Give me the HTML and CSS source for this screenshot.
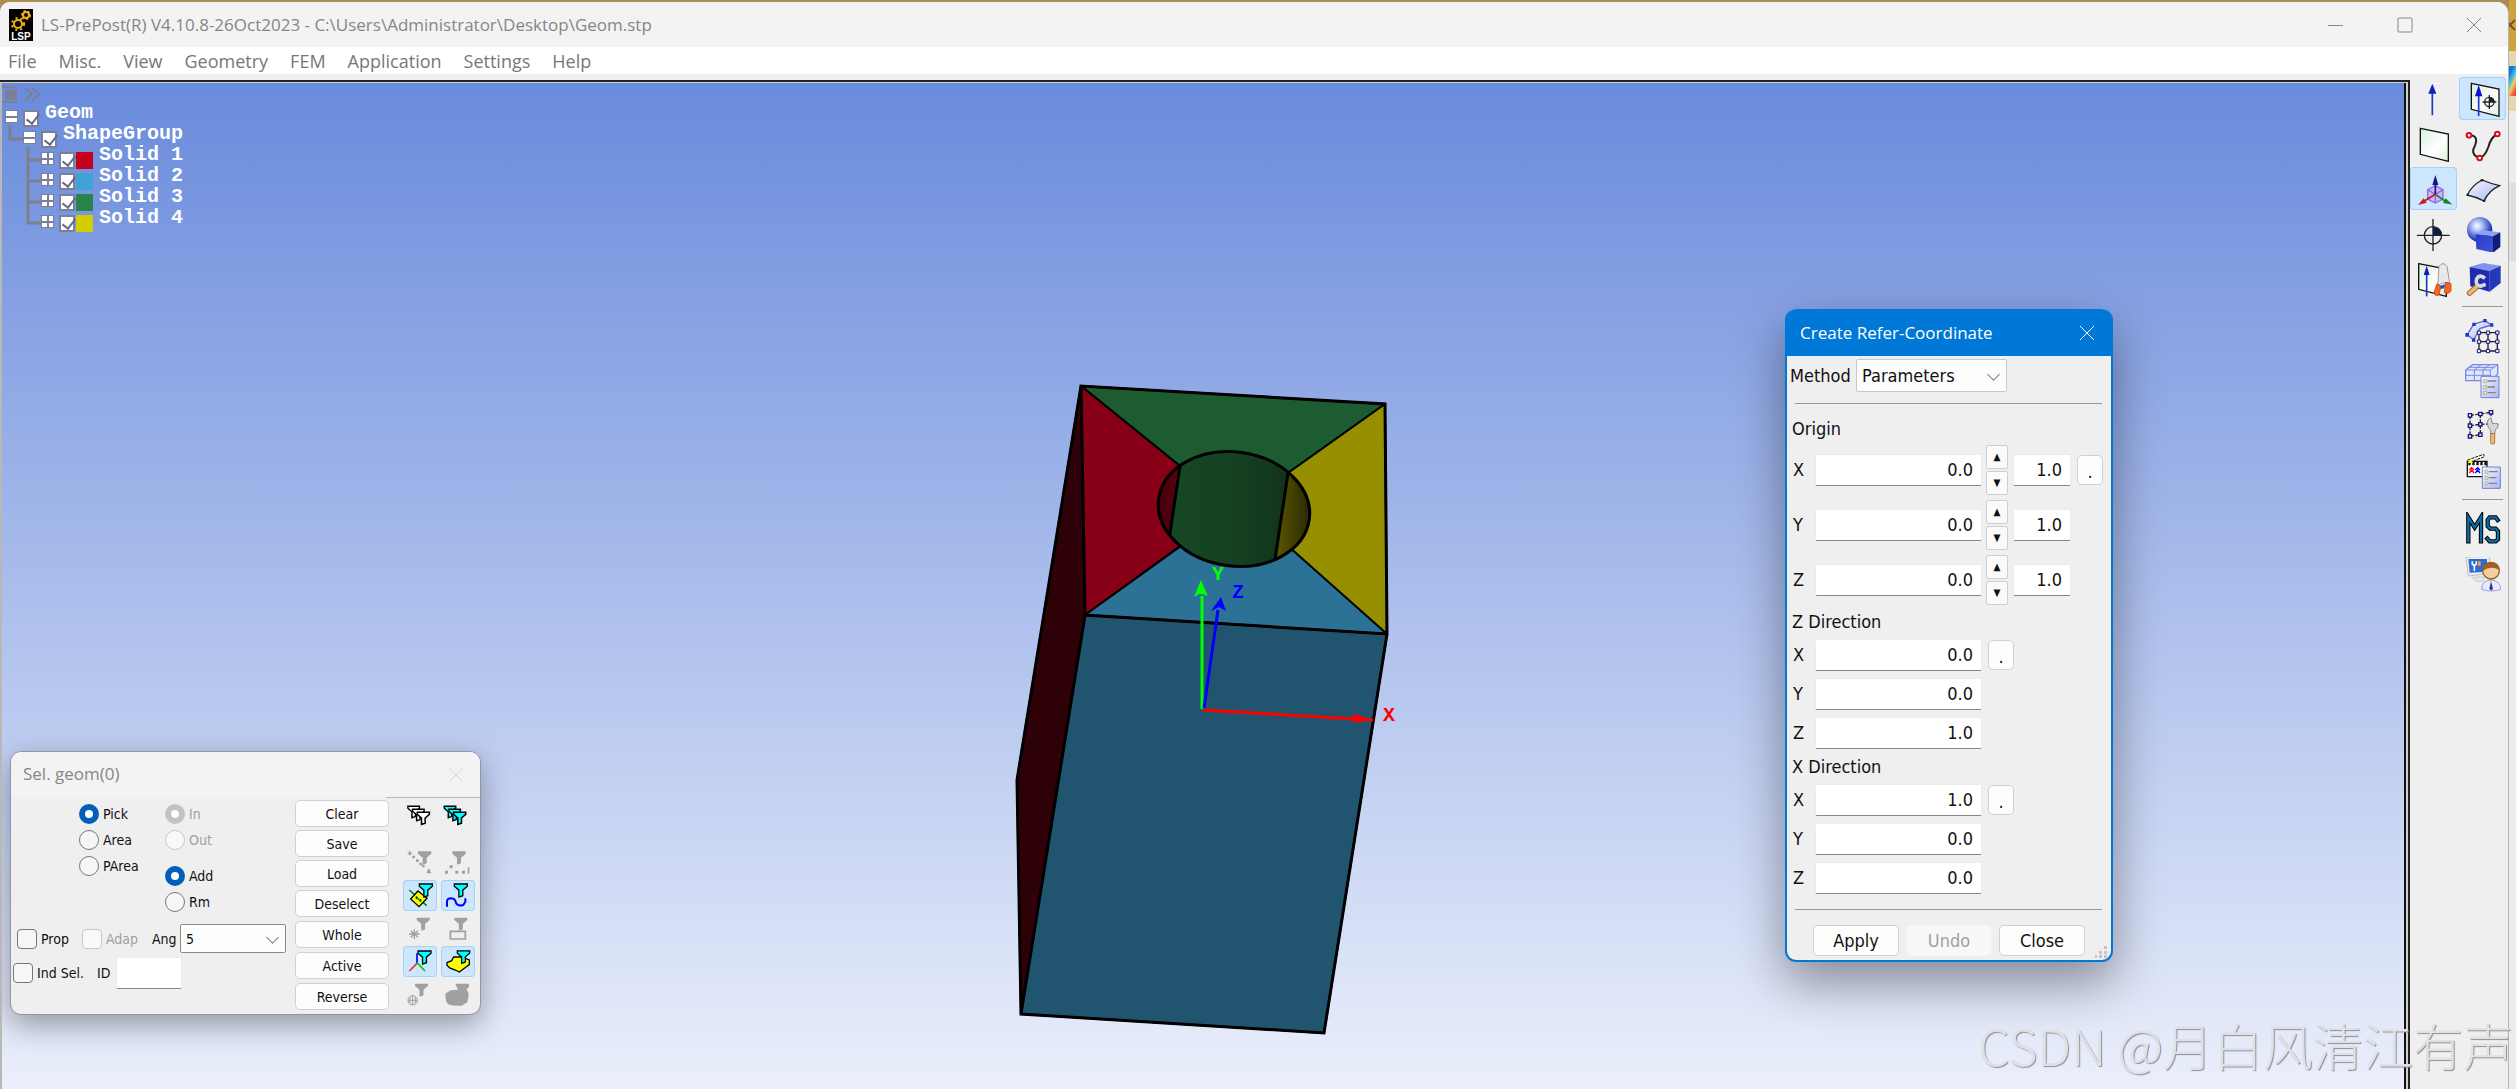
FILE: index.html
```html
<!DOCTYPE html>
<html lang="en">
<head>
<meta charset="utf-8">
<title>LS-PrePost(R) V4.10.8-26Oct2023</title>
<link rel="stylesheet" href="styles.css">
</head>
<body>
<svg class="defs" aria-hidden="true">
  <defs>
    <linearGradient id="sheet" x1="0" y1="0" x2="1" y2="1"><stop offset="0" stop-color="#d8efd8"/><stop offset=".6" stop-color="#fff"/><stop offset="1" stop-color="#d8f0d8"/></linearGradient>
    <linearGradient id="lilac" x1="0" y1="0" x2="1" y2="1"><stop offset="0" stop-color="#f6f8ff"/><stop offset="1" stop-color="#a9b6f4"/></linearGradient>
    <linearGradient id="face" x1="0" y1="0" x2="1" y2="1"><stop offset="0" stop-color="#2a3bc0"/><stop offset="1" stop-color="#3c55dd"/></linearGradient>
    <radialGradient id="ball" cx=".4" cy=".35" r=".7"><stop offset="0" stop-color="#fff"/><stop offset=".35" stop-color="#9fb2f2"/><stop offset=".8" stop-color="#2438b4"/><stop offset="1" stop-color="#16207c"/></radialGradient>
    <linearGradient id="bore" x1="0" x2="1"><stop offset="0" stop-color="#174a26"/><stop offset=".5" stop-color="#154122"/><stop offset="1" stop-color="#0e2c17"/></linearGradient>
    <linearGradient id="boreYellow" x1="0" x2="1"><stop offset="0" stop-color="#5f5b00"/><stop offset="1" stop-color="#1d1b00"/></linearGradient>
    <linearGradient id="boreRed" x1="0" x2="1"><stop offset="0" stop-color="#3a000a"/><stop offset="1" stop-color="#5e000f"/></linearGradient>
    <symbol id="funnel" viewBox="0 0 44 44" overflow="visible"><path d="M2 2H42V9L28 21V38L16 42V21L2 9Z" /></symbol>
    <symbol id="list" viewBox="0 0 58 68" overflow="visible"><path d="M2 2H56V66H2Z" fill="url(#lilac)" stroke="#7480cc" stroke-width="3"/><path d="M22 16H48M22 34H44M22 51H46" stroke="#80847c" stroke-width="4"/><path d="M10 12h9v9h-9zM10 30h9v9h-9zM10 47h9v9h-9z" fill="#f5f07a" stroke="#9a9ab0" stroke-width="2"/></symbol>
  </defs>
</svg>

<div class="window">
  <header class="titlebar">
    <svg class="app-logo" viewBox="0 0 24 32" aria-hidden="true"><path d="M0 0H24V32H0Z"/><g fill="none" stroke="#f2b01e"><circle cx="9" cy="15" r="4" stroke-width="2"/><circle cx="9" cy="15" r="6" stroke-width="2" stroke-dasharray="2 3"/><circle cx="17" cy="6" r="3" stroke-width="2"/><circle cx="17" cy="6" r="4" stroke-width="2" stroke-dasharray="2 2"/></g><text x="12" y="31" text-anchor="middle">LSP</text></svg>
    <h1 class="window-title">LS-PrePost(R) V4.10.8-26Oct2023 - C:\Users\Administrator\Desktop\Geom.stp</h1>
    <div class="caption-buttons">
      <button aria-label="Minimize"><svg viewBox="0 0 16 16"><path d="M0 8.500H15"/></svg></button>
      <button aria-label="Maximize"><svg viewBox="0 0 16 16"><rect x="1" y="1" width="14" height="14" rx="1"/></svg></button>
      <button aria-label="Close"><svg viewBox="0 0 16 16"><path d="M1 1L15 15M15 1L1 15"/></svg></button>
    </div>
  </header>
  <nav class="menubar">
    <a href="#">File</a><a href="#">Misc.</a><a href="#">View</a><a href="#">Geometry</a><a href="#">FEM</a><a href="#">Application</a><a href="#">Settings</a><a href="#">Help</a>
  </nav>

  <div class="workspace">
    <main class="scene-frame">
      <div class="scene">
        <svg class="model" viewBox="993 370 420 690" aria-label="Solid model">
          <g stroke="#000" stroke-width="2" stroke-linejoin="round">
            <path d="M1081 386L1017 780L1021 1014L1085 615Z" fill="#2e0007"/>
            <path d="M1085 615L1387 634L1324 1033L1021 1014Z" fill="#20546f"/>
            <path d="M1081 386L1385 404L1288 473Q1234 440 1180 466Z" fill="#1d5c31"/>
            <path d="M1081 386L1180 466V546L1085 615Z" fill="#880015"/>
            <path d="M1385 404L1387 634L1288 553V473Z" fill="#969000"/>
            <path d="M1085 615L1181 546H1288L1387 634Z" fill="#2c7296"/>
          </g>
          <clipPath id="hole"><ellipse cx="1234" cy="509" rx="77" ry="58" transform="rotate(8 1234 509)"/></clipPath>
          <g clip-path="url(#hole)">
            <path d="M1150 440H1320V580H1150Z" fill="url(#bore)"/>
            <path d="M1150 440H1183L1180 466L1170 540H1150Z" fill="url(#boreRed)"/>
            <path d="M1290 460H1320V580H1272Z" fill="url(#boreYellow)"/>
            <path d="M1180 466L1169 540M1288 473L1274 566" fill="none" stroke="#000" stroke-width="3"/>
          </g>
          <g fill="none" stroke="#000" stroke-width="3">
            <ellipse cx="1234" cy="509" rx="76" ry="57" transform="rotate(8 1234 509)"/>
            <path d="M1081 386L1085 615L1387 634L1385 404Z M1081 386L1017 780L1021 1014L1324 1033L1387 634M1085 615L1021 1014"/>
          </g>
          <g fill="none" stroke-width="3">
            <path d="M1202 709V596" stroke="#0f0"/><path d="M1201 580L1208 596L1203 594H1199L1194 597Z" fill="#0f0" stroke="none"/>
            <path d="M1204 708L1218 610" stroke="#00f"/><path d="M1221 597L1226 611L1219 607L1211 611Z" fill="#00f" stroke="none"/>
            <path d="M1203 710L1373 720" stroke="red"/><path d="M1374 720L1351 713L1357 719L1351 723Z" fill="red" stroke="none"/>
          </g>
          <g class="axis-names"><text x="1212" y="580" fill="#0f0">Y</text><text x="1232" y="598" fill="#00f">Z</text><text x="1383" y="721" fill="red">X</text></g>
        </svg>

        <aside class="tree">
          <svg class="tree-tools" viewBox="0 0 40 18" aria-hidden="true"><g fill="none" stroke="#7c7f98"><path d="M0 1H14V16H0" stroke-width="2"/><path d="M23 2L30 8L23 15M30 2L37 8L30 15" stroke-width="2"/></g><path d="M3 4H13V14H3Z" fill="#7c7f98"/></svg>
          <svg class="tree-lines" viewBox="0 0 40 120" aria-hidden="true"><path d="M8 12V26H22M26 34V110H40M26 47H40M26 68H40M26 89H40" fill="none" stroke="#7d8088" stroke-width="3"/></svg>
          <div class="node level-0"><span class="twisty"></span><input type="checkbox" id="t0" checked><label for="t0">Geom</label></div>
          <div class="node level-1"><span class="twisty"></span><input type="checkbox" id="t1" checked><label for="t1">ShapeGroup</label></div>
          <div class="node level-2"><span class="twisty plus"></span><input type="checkbox" id="t2" checked><i class="swatch red"></i><label for="t2">Solid 1</label></div>
          <div class="node level-2"><span class="twisty plus"></span><input type="checkbox" id="t3" checked><i class="swatch blue"></i><label for="t3">Solid 2</label></div>
          <div class="node level-2"><span class="twisty plus"></span><input type="checkbox" id="t4" checked><i class="swatch green"></i><label for="t4">Solid 3</label></div>
          <div class="node level-2"><span class="twisty plus"></span><input type="checkbox" id="t5" checked><i class="swatch yellow"></i><label for="t5">Solid 4</label></div>
        </aside>

        <section class="select-panel">
          <header class="panel-title"><h2>Sel. geom(0)</h2><button aria-label="Close"><svg viewBox="0 0 16 16"><path d="M1 1L15 15M15 1L1 15"/></svg></button></header>
          <div class="panel-body">
            <div class="options">
              <div class="radios">
                <div class="radio-col">
                  <label><input type="radio" name="pick" checked>Pick</label>
                  <label><input type="radio" name="pick">Area</label>
                  <label><input type="radio" name="pick">PArea</label>
                </div>
                <div class="radio-col">
                  <label class="off"><input type="radio" name="side" checked disabled>In</label>
                  <label class="off"><input type="radio" name="side" disabled>Out</label>
                  <label class="apart"><input type="radio" name="mode" checked>Add</label>
                  <label><input type="radio" name="mode">Rm</label>
                </div>
              </div>
              <div class="line prop-line">
                <label><input type="checkbox">Prop</label>
                <label class="off"><input type="checkbox" disabled>Adap</label>
                <label for="ang">Ang</label>
                <span class="drop ang"><select id="ang"><option>5</option></select></span>
              </div>
              <div class="line id-line">
                <label><input type="checkbox">Ind Sel.</label>
                <label for="pid">ID</label><input class="field" type="text" id="pid">
              </div>
            </div>
            <div class="actions">
              <button>Clear</button><button>Save</button><button>Load</button><button>Deselect</button><button>Whole</button><button>Active</button><button>Reverse</button>
            </div>
            <div class="filters">
              <button aria-label="Clear filters"><svg viewBox="1209 181 102 93"><g fill="#fff" stroke="#000" stroke-width="5"><use href="#funnel" x="1222" y="198" width="38" height="38"/><use href="#funnel" x="1236" y="207" width="38" height="38"/><use href="#funnel" x="1250" y="216" width="40" height="40"/></g></svg></button>
              <button aria-label="All filters"><svg viewBox="1323 181 102 93"><g fill="#0ff" stroke="#000" stroke-width="5"><use href="#funnel" x="1331" y="198" width="38" height="38"/><use href="#funnel" x="1345" y="207" width="38" height="38"/><use href="#funnel" x="1359" y="216" width="40" height="40"/></g></svg></button>
              <button class="second" aria-label="Edge filter" disabled><svg viewBox="1209 321 102 93"><g fill="#a0a0a0"><use href="#funnel" x="1252" y="332" width="44" height="44"/><path d="M1223 338h12v5h-12zM1227 334h5v12h-5zM1237 347h8v8h-8zM1248 358h8v8h-8zM1258 368h8v8h-8zM1266 374h8v8h-8zM1282 390l6 -4 6 14h-14z"/></g></svg></button>
              <button class="second" aria-label="Point filter" disabled><svg viewBox="1323 321 102 93"><g fill="#a0a0a0"><use href="#funnel" x="1355" y="332" width="44" height="44"/><path d="M1335 392h9v9h-9zM1349 376h9v9h-9zM1366 392h9v9h-9zM1386 392h9v9h-9zM1403 382h5v19h-5z"/></g></svg></button>
              <button class="on" aria-label="Surface filter"><svg viewBox="1209 421 102 93"><path d="M1228 451L1280 498" stroke="#080" stroke-width="5"/><path d="M1232 478L1254 454L1281 476L1257 501Z" fill="#ff0" stroke="#000" stroke-width="4"/><path d="M1249 470L1262 486M1249 470v9M1262 478v9" stroke="#060" stroke-width="4"/><use href="#funnel" x="1256" y="431" width="43" height="43" fill="#0ff" stroke="#000" stroke-width="4"/></svg></button>
              <button class="on" aria-label="Curve filter"><svg viewBox="1323 421 102 93"><path d="M1341 501V486Q1341 476 1354 476Q1366 477 1368 490Q1374 501 1390 496L1396 486V476" fill="none" stroke="#00f" stroke-width="6"/><use href="#funnel" x="1361" y="431" width="43" height="43" fill="#0ff" stroke="#000" stroke-width="4"/></svg></button>
              <button aria-label="Node filter" disabled><svg viewBox="1209 520 102 93"><use href="#funnel" x="1248" y="532" width="43" height="43" fill="#a0a0a0"/><path d="M1227 583H1259M1243 569V599M1232 573L1254 593M1254 573L1232 593" stroke="#a0a0a0" stroke-width="4"/></svg></button>
              <button aria-label="Element filter" disabled><svg viewBox="1323 520 102 93"><use href="#funnel" x="1360" y="532" width="45" height="43" fill="#a0a0a0"/><path d="M1351 575H1396V598H1351Z" fill="#efefef" stroke="#a0a0a0" stroke-width="5"/></svg></button>
              <button class="on" aria-label="Axis filter"><svg viewBox="1209 618 102 93"><g stroke-width="5"><path d="M1251 640V672" stroke="#00f"/><path d="M1251 670L1228 693" stroke="#f03030"/><path d="M1251 668L1275 693" stroke="#0c0"/></g><use href="#funnel" x="1252" y="631" width="43" height="43" fill="#0ff" stroke="#000" stroke-width="4"/></svg></button>
              <button class="on" aria-label="Solid filter"><svg viewBox="1323 618 102 93"><path d="M1341 668L1355 662L1361 651H1384L1408 660V674L1394 684L1378 696L1366 690L1349 684L1341 676Z" fill="#ff0" stroke="#000" stroke-width="4"/><use href="#funnel" x="1370" y="631" width="41" height="41" fill="#0ff" stroke="#000" stroke-width="4"/></svg></button>
              <button aria-label="Mesh filter" disabled><svg viewBox="1209 718 102 93"><use href="#funnel" x="1243" y="730" width="43" height="43" fill="#a0a0a0"/><g fill="none" stroke="#a0a0a0" stroke-width="3"><circle cx="1238" cy="782" r="14"/><path d="M1224 782H1252M1238 768V796M1230 772V792M1246 772V792"/></g></svg></button>
              <button aria-label="Part filter" disabled><svg viewBox="1323 718 102 93"><path d="M1366 732H1407V741L1399 750Q1408 756 1405 772L1402 788L1385 798Q1360 800 1345 794L1338 784L1336 762L1352 752L1374 750Z" fill="#a0a0a0"/></svg></button>
            </div>
          </div>
        </section>

        <section class="dialog">
          <header class="dialog-title"><h2>Create Refer-Coordinate</h2><button aria-label="Close"><svg viewBox="0 0 16 16"><path d="M1 1L15 15M15 1L1 15"/></svg></button></header>
          <div class="dialog-body">
            <div class="method"><label for="method">Method</label><span class="drop"><select id="method"><option>Parameters</option></select></span></div>
            <hr>
            <h3 class="origin-head">Origin</h3>
            <div class="row tall"><label for="ox">X</label><input class="field" type="text" id="ox" value="0.0"><span class="spin"><button aria-label="Up">▲</button><button aria-label="Down">▼</button></span><input class="field step" type="text" aria-label="X step" value="1.0"><button class="dot">.</button></div>
            <div class="row tall"><label for="oy">Y</label><input class="field" type="text" id="oy" value="0.0"><span class="spin"><button aria-label="Up">▲</button><button aria-label="Down">▼</button></span><input class="field step" type="text" aria-label="Y step" value="1.0"></div>
            <div class="row tall"><label for="oz">Z</label><input class="field" type="text" id="oz" value="0.0"><span class="spin"><button aria-label="Up">▲</button><button aria-label="Down">▼</button></span><input class="field step" type="text" aria-label="Z step" value="1.0"></div>
            <h3>Z Direction</h3>
            <div class="row"><label for="zx">X</label><input class="field" type="text" id="zx" value="0.0"><button class="dot">.</button></div>
            <div class="row"><label for="zy">Y</label><input class="field" type="text" id="zy" value="0.0"></div>
            <div class="row"><label for="zz">Z</label><input class="field" type="text" id="zz" value="1.0"></div>
            <h3>X Direction</h3>
            <div class="row"><label for="xx">X</label><input class="field" type="text" id="xx" value="1.0"><button class="dot">.</button></div>
            <div class="row"><label for="xy">Y</label><input class="field" type="text" id="xy" value="0.0"></div>
            <div class="row"><label for="xz">Z</label><input class="field" type="text" id="xz" value="0.0"></div>
            <hr class="foot-rule">
            <div class="dialog-buttons"><button>Apply</button><button disabled>Undo</button><button>Close</button></div>
          </div>
          <svg class="grip" viewBox="0 0 12 12" aria-hidden="true"><path d="M9 0h3v3h-3zM9 5h3v3h-3zM4 5h3v3h-3zM9 9h3v3h-3zM4 9h3v3h-3zM0 9h2v3h-2z" fill="#c4c4c4"/></svg>
        </section>
      </div>
    </main>

    <aside class="toolbars">
      <div class="toolbar">
        <button aria-label="Axis"><svg viewBox="105 242 108 108"><path d="M154 345V270" stroke="#1a3ac8" stroke-width="5"/><path d="M154 250L166 280H142Z" fill="#1020c0"/><path d="M135 250H180" stroke="#fff" stroke-width="2"/></svg></button>
        <button aria-label="Plane"><svg viewBox="105 377 108 108"><path d="M118 384L202 401V483L118 462Z" fill="url(#sheet)" stroke="#111" stroke-width="4"/></svg></button>
        <button class="on" aria-label="Coordinate"><svg viewBox="105 512 108 108"><path d="M163 556L186 568V596L163 608L140 596V568ZM163 582V608M163 582L140 568M163 582L186 568" fill="#c9b8f5" stroke="#8f6ae8" stroke-width="4"/><path d="M163 582V550" stroke="#118" stroke-width="5"/><path d="M163 524L172 554H154Z" fill="#118"/><path d="M163 582L130 602" stroke="#c11" stroke-width="5"/><path d="M111 614L128 594L137 607Z" fill="#d01818"/><path d="M163 582L192 602" stroke="#182" stroke-width="5"/><path d="M214 613L186 608L194 594Z" fill="#128a1c"/></svg></button>
        <button aria-label="Point"><svg viewBox="105 647 108 108"><path d="M156 705V679A26 26 0 0 1 182 705Z" fill="#0c1c50"/><circle cx="156" cy="705" r="26" fill="none" stroke="#222" stroke-width="4"/><path d="M108 705H206M156 656V752" stroke="#222" stroke-width="4"/></svg></button>
        <button aria-label="Measure geometry"><svg viewBox="105 782 108 108"><path d="M113 790L196 806V888L113 867Z" fill="url(#sheet)" stroke="#111" stroke-width="4"/><path d="M137 888V820" stroke="#1a3ac8" stroke-width="5"/><path d="M137 796L146 824H128Z" fill="#1020c0"/><path d="M170 858L174 798Q186 782 198 798L206 848Q186 842 170 858Z" fill="#e8e8ea" stroke="#999" stroke-width="3"/><path d="M168 850L180 858L174 884Q158 890 160 872ZM194 846L210 850V872Q202 884 190 876Z" fill="#f26a10" stroke="#c22" stroke-width="2"/><path d="M178 856L192 852L190 864L178 866Z" fill="#2550c8"/></svg></button>
      </div>
      <div class="toolbar">
        <button class="on" aria-label="Reference geometry"><svg viewBox="252 242 108 108"><path d="M271 249L354 266V348L271 327Z" fill="url(#sheet)" stroke="#111" stroke-width="4"/><path d="M293 347V280" stroke="#1a3ac8" stroke-width="5"/><path d="M293 254L304 288H282Z" fill="#0c10d8"/><path d="M325 305V289A16 16 0 0 1 341 305Z" fill="#222"/><g fill="none" stroke="#222" stroke-width="4"><circle cx="325" cy="305" r="14"/><path d="M305 305H346M325 284V326"/></g></svg></button>
        <button aria-label="Curve"><svg viewBox="252 377 108 108"><path d="M264 405Q294 404 282 436Q266 462 296 474Q312 468 322 440Q330 410 349 401" fill="none" stroke="#222" stroke-width="6"/><g fill="#fff" stroke="#d0101c" stroke-width="6"><circle cx="264" cy="405" r="7"/><circle cx="349" cy="401" r="7"/><circle cx="296" cy="473" r="7"/></g></svg></button>
        <button aria-label="Surface"><svg viewBox="252 512 108 108"><path d="M303 539Q330 550 356 556Q324 570 309 602Q286 590 259 584Q272 556 303 539Z" fill="url(#lilac)" stroke="#222" stroke-width="4"/><path d="M299 537h8v6h-8zM257 580h6v6h-6zM306 598h7v6h-7z" fill="#111"/></svg></button>
        <button aria-label="Solid"><svg viewBox="252 647 108 108"><circle cx="296" cy="688" r="38" fill="url(#ball)"/><path d="M284 702L306 690L358 696L336 708Z" fill="#8fa2f2"/><path d="M284 702L336 708V757L286 746Z" fill="url(#face)"/><path d="M336 708L358 696V740L336 757Z" fill="#141a78"/></svg></button>
        <button aria-label="Geometry tools"><svg viewBox="252 782 108 108"><path d="M266 800L306 788L359 796L326 812Z" fill="#7f94ee"/><path d="M266 800L326 812V874L268 858Z" fill="#1b2cae"/><path d="M326 812L359 796V848L326 874Z" fill="#2438bc"/><path d="M266 878L284 862" stroke="#a8672c" stroke-width="17" stroke-linecap="round"/><path d="M266 878L284 862" stroke="#e9b978" stroke-width="11" stroke-linecap="round"/><path d="M312 834Q296 820 287 836Q282 854 298 858L314 852" fill="none" stroke="#d8d8dc" stroke-width="11"/></svg></button>
        <hr>
        <button aria-label="Element and mesh"><svg viewBox="252 87 108 108"><path d="M259 134L278 103L312 92L332 105L296 116L278 150Z" fill="url(#lilac)" stroke="#5b66d8" stroke-width="4"/><path d="M294 128H349V183H294ZM321 128V183M294 155H349" fill="none" stroke="#222" stroke-width="4"/><path d="M253 129h11v11h-11zM274 98h10v10h-10zM307 87h10v10h-10zM327 100h10v10h-10zM273 145h10v10h-10z" fill="#2038c8"/><path d="M289 123h10v10h-10zM316 123h10v10h-10zM344 123h10v10h-10zM289 150h10v10h-10zM316 150h10v10h-10zM344 150h10v10h-10zM289 178h10v10h-10zM316 178h10v10h-10zM344 178h10v10h-10z" fill="#eef" stroke="#18187c" stroke-width="3"/></svg></button>
        <button aria-label="Model and part"><svg viewBox="252 222 108 108"><path d="M254 240L275 224H350V252L332 272H254Z" fill="#dce8fb" stroke="#7a86e0" stroke-width="4"/><path d="M254 240H328L350 224M254 256H330M280 240V272M306 240V272M328 240V272M280 240L300 224M306 240L326 224M264 232H340" fill="none" stroke="#7a86e0" stroke-width="3"/><use href="#list" x="298" y="257" width="58" height="68"/></svg></button>
        <button aria-label="Element tools"><svg viewBox="252 357 108 108"><path d="M267 376L298 372L330 367M267 407L298 403L322 402M267 439L298 434M267 376V439M298 372V434M330 367V380" fill="none" stroke="#222" stroke-width="4" stroke-dasharray="12 4"/><path d="M262 371h10v10h-10zM293 367h10v10h-10zM325 362h10v10h-10zM262 402h10v10h-10zM293 398h10v10h-10zM262 434h10v10h-10zM293 429h10v10h-10z" fill="#eef" stroke="#18187c" stroke-width="4"/><path d="M319 400Q318 388 330 384L335 402L343 400L352 402Q352 416 342 420V432H329V420Q320 414 319 400Z" fill="#d5d6da" stroke="#888" stroke-width="3"/><path d="M335 436V456" stroke="#b07834" stroke-width="15" stroke-linecap="round"/><path d="M335 436V456" stroke="#f0bd78" stroke-width="9" stroke-linecap="round"/></svg></button>
        <button aria-label="Post"><svg viewBox="252 492 108 108"><path d="M260 510L308 493L310 500L264 518Z" fill="#fff" stroke="#111" stroke-width="3" stroke-dasharray="9 3"/><path d="M259 514H318V560H259Z" fill="#fff" stroke="#111" stroke-width="4"/><path d="M262 520H318" stroke="#111" stroke-width="11" stroke-dasharray="7 5"/><path d="M262 511l12-4v12h-12z" fill="#ff0"/><path d="M265 540L272 533L279 540M265 549L272 540L279 549" fill="none" stroke="red" stroke-width="4"/><path d="M283 540L290 533L297 540M283 549L290 540L297 549" fill="none" stroke="#00f" stroke-width="4"/><use href="#list" x="302" y="529" width="58" height="68"/></svg></button>
        <hr>
        <button aria-label="MS"><svg viewBox="252 666 108 108"><g fill="none" stroke-linecap="square" stroke-linejoin="miter"><path d="M262 754V682L281 712L300 682V754M350 690L344 682H326L320 690V708L328 716H344L351 724V748L344 754H326L319 746" stroke="#000" stroke-width="13"/><path d="M262 754V682L281 712L300 682V754M350 690L344 682H326L320 690V708L328 716H344L351 724V748L344 754H326L319 746" stroke="#0d6ca4" stroke-width="7"/></g></svg></button>
        <button aria-label="Favorites"><svg viewBox="252 801 108 108"><path d="M255 801L325 799V850L262 858Z" fill="#eef0f6" stroke="#b8bcc8" stroke-width="3"/><path d="M262 807H318V845L266 848Z" fill="#2f6cd0"/><path d="M274 814v8l6 5v16M286 814v8l-6 5" fill="none" stroke="#fff" stroke-width="5"/><path d="M295 814v14" stroke="#f5a020" stroke-width="8"/><path d="M276 866Q290 880 310 872L306 860L276 862Z" fill="#e4e6ec" stroke="#b8bcc8" stroke-width="2"/><path d="M302 898Q302 872 330 870Q358 872 359 898Q330 908 302 898Z" fill="#e8ebff" stroke="#9aa0dc" stroke-width="3"/><path d="M330 874L336 896L330 902L325 896Z" fill="#2a3496"/><circle cx="330" cy="842" r="25" fill="#f6cf9c" stroke="#8a5a20" stroke-width="4"/><path d="M306 842Q304 818 330 816Q356 818 355 840Q330 826 306 842Z" fill="#9a6424"/></svg></button>
      </div>
    </aside>
  </div>
</div>

<div class="desktop-edge" aria-hidden="true">
  <div class="edge-gold"><svg viewBox="0 0 7 12"><path d="M-4 1L6 11M-4 11L6 1" stroke="#6e5a2c" stroke-width="2"/></svg></div>
  <div class="edge-sand"><i></i></div>
  <div class="edge-grey"></div>
</div>
<div class="watermark">CSDN @月白风清江有声</div>
</body>
</html>
```
FILE: styles.css
```css
* { box-sizing: border-box; }

body {
  margin: 0;
  height: 100vh;
  display: flex;
  overflow: hidden;
  position: relative;
  background: #a98d52;
  font-family: "Open Sans", "Noto Sans", sans-serif;
  color: #111;
}

.defs { position: absolute; width: 0; height: 0; }

h1, h2, h3 { margin: 0; font-weight: 400; }

button {
  padding: 0;
  border: 0;
  background: none;
  font: inherit;
  color: inherit;
}

button svg { display: block; fill: none; }

/* Main window */
.window {
  flex: 1;
  min-width: 0;
  margin-top: 2px;
  display: flex;
  flex-direction: column;
  background: #efefef;
  border-right: 1px solid #b4b4b4;
  border-radius: 10px 12px 0 0;
  overflow: hidden;
}

.titlebar {
  display: flex;
  align-items: center;
  height: 45px;
  padding-left: 9px;
  background: #f3f3f3;
}

.app-logo { width: 24px; height: 32px; }
.app-logo text { font: bold 10px "Liberation Sans", sans-serif; fill: #fff; }

.window-title {
  flex: 1;
  margin-left: 8px;
  font-size: 17px;
  color: #868686;
}

.caption-buttons { display: flex; }
.caption-buttons button {
  width: 69px;
  height: 45px;
  display: grid;
  place-items: center;
}
.caption-buttons svg { width: 16px; height: 16px; stroke: #868686; }

.menubar {
  display: flex;
  gap: 22px;
  height: 27px;
  padding-left: 8px;
  background: #fff;
  line-height: 28px;
  font-size: 18px;
}
.menubar a { color: #777; text-decoration: none; }

.workspace { flex: 1; display: flex; min-height: 0; }

.scene-frame {
  flex: 1;
  display: flex;
  margin-top: 6px;
  padding: 1px 2px 0 0;
  border-top: 2px solid #222;
  border-right: 2px solid #222;
  background: #d0d0d0;
}

.scene {
  flex: 1;
  display: flex;
  justify-content: center;
  position: relative;
  overflow: hidden;
  border-right: 2px solid #111;
  border-left: 2px solid #b8b8b8;
  background: linear-gradient(#698bdc, #ebeffb);
}

.model { width: 420px; height: 690px; margin-top: 287px; flex: none; }
.axis-names { font: bold 20px "Liberation Mono", monospace; }

/* Geometry tree */
.tree {
  position: absolute;
  left: 0;
  top: 3px;
  padding-top: 16px;
  color: #fff;
  font: bold 20px/21px "Liberation Mono", monospace;
}
.tree-tools { position: absolute; left: 0; top: 0; width: 40px; height: 18px; }
.tree-lines { position: absolute; left: 0; top: 27px; width: 40px; height: 120px; }

.node { position: relative; display: flex; height: 21px; }
.level-0 { padding-left: 3px; }
.level-1 { padding-left: 21px; }
.level-2 { padding-left: 39px; }
.node label { margin-left: 6px; }

.twisty {
  width: 13px;
  height: 13px;
  margin: 8px 5px 0 0;
  border: 1px solid #7c7f98;
  background: linear-gradient(#7c7f98, #7c7f98) center / 100% 2px no-repeat #fff;
}
.plus {
  background:
    linear-gradient(#7c7f98, #7c7f98) center / 100% 2px no-repeat,
    linear-gradient(#7c7f98, #7c7f98) center / 2px 100% no-repeat #fff;
}

.node input {
  appearance: none;
  position: relative;
  width: 16px;
  height: 17px;
  margin: 8px 0 0;
  border: 2px solid #7c7f98;
  background: #fff;
}
.node input:checked::after {
  content: "";
  position: absolute;
  left: 4px;
  top: -1px;
  width: 6px;
  height: 11px;
  border: solid #666a88;
  border-width: 0 2px 2px 0;
  transform: rotate(38deg);
}

.swatch { width: 17px; height: 17px; margin: 8px 0 0 1px; }
.swatch.red { background: #c4001c; }
.swatch.blue { background: #3fa2d8; }
.swatch.green { background: #28854a; }
.swatch.yellow { background: #d3cd00; }

/* Shared controls */
.drop { position: relative; display: flex; }
.drop::after {
  content: "";
  position: absolute;
  right: 9px;
  top: 50%;
  width: 8px;
  height: 8px;
  margin-top: -6px;
  border: solid #777;
  border-width: 0 1px 1px 0;
  transform: rotate(45deg);
}
.drop select {
  appearance: none;
  width: 100%;
  padding: 0 5px;
  border: 1px solid #c8c8c8;
  border-radius: 2px;
  background: #fdfdfd;
  font: inherit;
  color: #111;
}

.field {
  height: 32px;
  padding: 0 8px 2px;
  border: 1px solid #ebebeb;
  border-bottom: 1px solid #868686;
  border-radius: 2px;
  background: #fff;
  font: inherit;
  color: #111;
  text-align: right;
}

/* Selection panel */
.select-panel {
  position: absolute;
  left: 8px;
  bottom: 74px;
  width: 471px;
  border: 1px solid #9096a6;
  border-radius: 11px;
  background: #efefef;
  box-shadow: 0 10px 30px rgba(0, 0, 0, 0.35);
  font: 14px/20px "DejaVu Sans Condensed", "DejaVu Sans", sans-serif;
}

.panel-title {
  position: relative;
  display: flex;
  justify-content: space-between;
  height: 46px;
  padding: 0 16px 0 12px;
  border-radius: 11px 11px 0 0;
  background: #f3f3f3;
  line-height: 44px;
}
.panel-title::after {
  content: "";
  position: absolute;
  right: 0;
  bottom: 0;
  width: 94px;
  height: 1px;
  background: #b8b8b8;
}
.panel-title h2 { font-family: "Open Sans", sans-serif; font-size: 17px; color: #868686; }
.panel-title svg { width: 16px; height: 16px; stroke: #d4d4d4; }

.panel-body { display: flex; padding-bottom: 4px; }
.options { width: 284px; padding-top: 6px; }
.radios { display: flex; padding-left: 68px; }
.radio-col { display: flex; flex-direction: column; gap: 6px; width: 86px; }
.radio-col .apart { margin-top: 10px; }

.options label { display: flex; align-items: center; gap: 4px; white-space: nowrap; }
.options .off { color: #a0a0a0; }

.options input[type="radio"],
.options input[type="checkbox"] {
  appearance: none;
  flex: none;
  width: 20px;
  height: 20px;
  margin: 0;
  border: 1px solid #777;
  background: #f6f6f6;
}
.options input[type="radio"] { border-radius: 50%; }
.options input[type="checkbox"] { border-radius: 4px; }
.options input[type="radio"]:checked { border: 6px solid #005fb8; background: #fff; }
.options input:disabled { border-color: #c8c8c8; background: #f9f9f9; }
.options input[type="radio"]:checked:disabled { border-color: #c3c3c3; }

.line { display: flex; align-items: center; }
.prop-line { margin-top: 12px; padding-left: 6px; }
.prop-line label { width: 65px; }
.prop-line label.off { width: 70px; }
.prop-line label[for] { width: 28px; }
.ang { width: 106px; height: 29px; }
.ang select { border-color: #8a8a8a; }
.id-line { margin-top: 4px; padding-left: 2px; }
.id-line label:first-child { width: 84px; }
.id-line label[for] { width: 19px; }
.id-line .field { width: 66px; }

.actions { display: flex; flex-direction: column; gap: 3px; width: 94px; padding-top: 2px; }
.actions button,
.dialog-buttons button,
.dot {
  border: 1px solid #d0d0d0;
  border-radius: 5px;
  background: #fdfdfd;
}
.actions button { height: 27px; line-height: 24px; }
.actions button:nth-child(n+5) { margin-top: 1px; }

.filters {
  display: grid;
  grid-template-columns: 34px 34px;
  gap: 2px 4px;
  align-content: start;
  margin-left: 14px;
  padding-top: 2px;
}
.filters button { height: 31px; }
.filters svg { width: 34px; height: 31px; }
.filters .second { margin-top: 14px; }
.on { border-radius: 4px; background: #cce6fd; box-shadow: inset 0 0 0 1px #a4d2f8; }

/* Coordinate dialog */
.dialog {
  position: absolute;
  right: 291px;
  top: 226px;
  width: 328px;
  border: 2px solid #0078d7;
  border-top: 0;
  border-radius: 11px;
  background: #efefef;
  box-shadow: 0 20px 50px rgba(0, 0, 0, 0.4);
  font: 18px/22px "DejaVu Sans Condensed", "DejaVu Sans", sans-serif;
}
.dialog-title {
  display: flex;
  justify-content: space-between;
  height: 47px;
  padding: 0 16px 0 13px;
  border-radius: 9px 9px 0 0;
  background: #0078d7;
  color: #fff;
  line-height: 47px;
}
.dialog-title h2 { font-family: "Open Sans", sans-serif; font-size: 17px; }
.dialog-title svg { width: 16px; height: 16px; stroke: #fff; }

.dialog-body { padding: 3px 3px 4px; }
.method { display: flex; align-items: center; }
.method label { width: 66px; }
.method .drop { width: 151px; height: 33px; }

hr { height: 1px; margin: 0; border: 0; background: #999; }
.dialog-body hr { margin: 11px 6px 0 5px; }
.dialog-body h3 { margin-bottom: 3px; padding-left: 2px; font-size: 18px; line-height: 28px; }
.dialog-body .origin-head { margin-bottom: 1px; padding-top: 10px; line-height: 30px; }

.row { display: flex; align-items: center; height: 32px; margin-bottom: 7px; padding-left: 3px; }
.row.tall { height: 50px; margin-bottom: 5px; }
.row:has(+ h3) { margin-bottom: 4px; }
.row.tall:has(+ h3) { margin-bottom: 3px; }
.row label { width: 22px; }
.row .field { width: 167px; }
.row .field.step { width: 58px; margin-left: 5px; }
.row .dot { width: 26px; height: 30px; margin-left: 6px; line-height: 32px; }

.spin { display: flex; flex-direction: column; gap: 2px; margin-left: 4px; }
.spin button {
  width: 22px;
  height: 24px;
  border: 1px solid #cfcfcf;
  border-radius: 2px;
  background: #fafafa;
  font-size: 10px;
  line-height: 20px;
}

.dialog-body .foot-rule { margin-top: 15px; }
.dialog-buttons { display: flex; gap: 7px; margin-top: 15px; padding-left: 23px; }
.dialog-buttons button { width: 86px; height: 31px; }
.dialog-buttons button:disabled { border-color: #f4f4f4; background: #f8f8f8; color: #a0a0a0; }
.grip { position: absolute; right: 4px; bottom: 2px; width: 12px; height: 12px; }

/* Icon toolbars */
.toolbars { display: flex; gap: 2px; width: 98px; padding: 3px 2px 0 0; }
.toolbar { display: flex; flex-direction: column; gap: 2px; flex: 1; }
.toolbar button { display: grid; place-items: center; height: 43px; }
.toolbar svg { width: 36px; height: 36px; }
.toolbar hr { height: 1px; margin: 4px 3px 6px; }

/* Strip of desktop beside the window */
.desktop-edge { width: 7px; display: flex; flex-direction: column; background: #ececec; }
.edge-gold { height: 51px; padding-top: 19px; background: #d0a23f; }
.edge-gold svg { display: block; width: 7px; height: 12px; }
.edge-sand { height: 60px; padding-top: 15px; background: #e4d6b0; }
.edge-sand i { display: block; height: 30px; background: linear-gradient(115deg, #0a7bd8 20%, #4dc2e8 45%, #f4d060 60%, #e8503c 85%); }
.edge-grey { height: 78px; margin-top: 72px; background: #dfdfdf; }

.watermark {
  position: absolute;
  right: 3px;
  bottom: 9px;
  font: 300 50px/72px "Noto Sans CJK SC", sans-serif;
  color: #e0e1e3;
  text-shadow: 1px 1px 1px #8c8f98;
  white-space: nowrap;
}
```
